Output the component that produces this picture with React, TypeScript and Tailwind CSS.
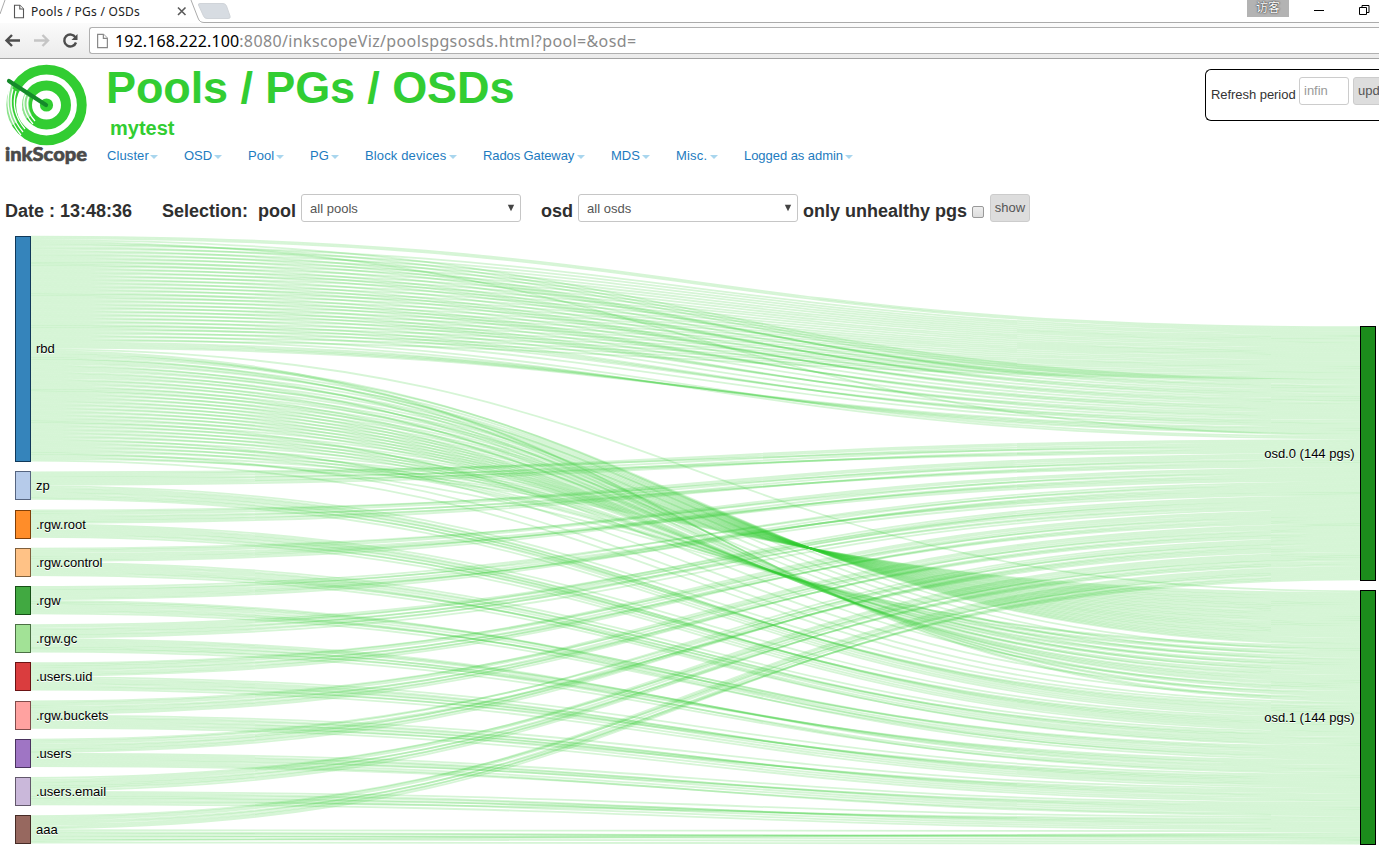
import React from "react";

type Link = { pool: number; osd: number; sy: number; ty: number };
type Cmp = (a: Link, b: Link) => number;

const K = 1.764;
const PAD = 9.97;
const TOP = 235.65;

const pools = [
  { name: "rbd", pgs: 64, color: "#3584bb", border: "#10395a" },
  { name: "zp", pgs: 8, color: "#b6cbea", border: "#566580" },
  { name: ".rgw.root", pgs: 8, color: "#ff8d29", border: "#804009" },
  { name: ".rgw.control", pgs: 8, color: "#ffc286", border: "#80603c" },
  { name: ".rgw", pgs: 8, color: "#41a941", border: "#165016" },
  { name: ".rgw.gc", pgs: 8, color: "#a2e296", border: "#4c7045" },
  { name: ".users.uid", pgs: 8, color: "#da3d3e", border: "#6b1314" },
  { name: ".rgw.buckets", pgs: 8, color: "#ffa2a0", border: "#804c4b" },
  { name: ".users", pgs: 8, color: "#9f75c4", border: "#4a335f" },
  { name: ".users.email", pgs: 8, color: "#cab8da", border: "#62586b" },
  { name: "aaa", pgs: 8, color: "#97685f", border: "#462b26" },
];

const osds = [
  { name: "osd.0 (144 pgs)", y: 326.3 },
  { name: "osd.1 (144 pgs)", y: 590.4 },
];

// In-place quicksort; equal keys are deliberately left in partition order.
function quickSort(a: Link[], cmp: Cmp, from = 0, to = a.length): void {
  while (true) {
    if (to - from <= 10) {
      for (let i = from + 1; i < to; i++) {
        const el = a[i];
        let j = i - 1;
        for (; j >= from; j--) {
          if (cmp(a[j], el) > 0) a[j + 1] = a[j];
          else break;
        }
        a[j + 1] = el;
      }
      return;
    }
    const third = from + ((to - from) >> 1);
    let v0 = a[from];
    let v1 = a[to - 1];
    let v2 = a[third];
    if (cmp(v0, v1) > 0) [v0, v1] = [v1, v0];
    if (cmp(v0, v2) >= 0) {
      const t = v0;
      v0 = v2;
      v2 = v1;
      v1 = t;
    } else if (cmp(v1, v2) > 0) {
      [v1, v2] = [v2, v1];
    }
    a[from] = v0;
    a[to - 1] = v2;
    const pivot = v1;
    let low = from + 1;
    let high = to - 1;
    a[third] = a[low];
    a[low] = pivot;
    partition: for (let i = low + 1; i < high; i++) {
      let el = a[i];
      let order = cmp(el, pivot);
      if (order < 0) {
        a[i] = a[low];
        a[low] = el;
        low++;
      } else if (order > 0) {
        do {
          high--;
          if (high === i) break partition;
          order = cmp(a[high], pivot);
        } while (order > 0);
        a[i] = a[high];
        a[high] = el;
        if (order < 0) {
          el = a[i];
          a[i] = a[low];
          a[low] = el;
          low++;
        }
      }
    }
    if (to - high < low - from) {
      quickSort(a, cmp, high, to);
      to = low;
    } else {
      quickSort(a, cmp, from, low);
      from = high;
    }
  }
}

// Completes a slot table: every free target takes the next unused source.
function fill(table: number[], descending: boolean): number[] {
  const used = new Set(table.filter((s) => s !== undefined));
  const free = Array.from({ length: 64 }, (_, i) => i).filter((i) => !used.has(i));
  if (descending) free.reverse();
  return Array.from({ length: 64 }, (_, j) => (table[j] !== undefined ? table[j] : (free.shift() as number)));
}

function rbdToOsd0(): number[] {
  const t: number[] = [];
  t[0] = 0;
  t[1] = 1;
  for (let j = 2; j < 30; j++) t[j] = 2 * j + 1;
  [63, 62, 61, 60, 3].forEach((s, i) => (t[57 + i] = s));
  const full = fill(t, false);
  for (let j = 33; j < 54; j += 4) [full[j], full[j + 2]] = [full[j + 2], full[j]];
  return full;
}

function rbdToOsd1(): number[] {
  const t: number[] = [];
  t[0] = 0;
  for (let j = 1; j <= 30; j++) t[j] = 64 - 2 * j;
  [3, 7, 11, 15, 19, 23, 27, 41, 51, 59, 63].forEach((s, i) => (t[33 + 3 * i] = s));
  return fill(t, true);
}

function layout() {
  let y = TOP;
  const nodes = pools.map((p) => {
    const h = p.pgs * 2 * K;
    const node = { ...p, y, h };
    y += h + PAD;
    return node;
  });
  const links: Link[] = [];
  pools.forEach((p, i) => {
    for (let g = 0; g < p.pgs; g++) {
      links.push({ pool: i, osd: 0, sy: 0, ty: 0 });
      links.push({ pool: i, osd: 1, sy: 0, ty: 0 });
    }
  });
  nodes.forEach((n, i) => {
    const own = links.filter((l) => l.pool === i);
    quickSort(own, (a, b) => a.osd - b.osd);
    own.forEach((l, k) => (l.sy = n.y + (k + 0.5) * K));
  });
  osds.forEach((o, i) => {
    const own = links.filter((l) => l.osd === i);
    quickSort(own, (a, b) => a.pool - b.pool);
    const slots = i === 0 ? rbdToOsd0() : rbdToOsd1();
    own.forEach((l, k) => {
      l.ty = o.y + (k + 0.5) * K;
      if (l.pool === 0) l.sy = TOP + (slots[k] + i * 64 + 0.5) * K;
    });
  });
  return { nodes, links };
}

const { nodes, links } = layout();

function Sankey() {
  return (
    <svg width="1379" height="620" viewBox="0 230 1379 620" className="block font-['Liberation_Sans',Arial,sans-serif] text-[13px]">
      <g fill="none" stroke="#32cd32" strokeOpacity="0.2" strokeWidth={K + 0.03}>
        {links.map((l, i) => (
          <path key={i} d={`M31,${l.sy}C695.5,${l.sy} 695.5,${l.ty} 1360,${l.ty}`} />
        ))}
      </g>
      {nodes.map((n) => (
        <g key={n.name}>
          <rect x="15.5" y={Math.round(n.y) + 0.5} width="15" height={Math.floor(n.h)} fill={n.color} stroke={n.border} shapeRendering="crispEdges" />
          <text x="36" y={Math.round(n.y + n.h / 2 + 4.85)} fill="#000" className="[text-shadow:0_1px_0_#fff]">{n.name}</text>
        </g>
      ))}
      {osds.map((o) => (
        <g key={o.name}>
          <rect x="1360.5" y={Math.round(o.y) + 0.5} width="15" height="254" fill="#1c8c1c" stroke="#000" shapeRendering="crispEdges" />
          <text x="1354.5" y={o.y + 131.5} textAnchor="end" fill="#000" className="[text-shadow:0_1px_0_#fff]">{o.name}</text>
        </g>
      ))}
    </svg>
  );
}

function PageIcon({ className, stroke }: { className: string; stroke: string }) {
  return (
    <svg viewBox="0 0 12 14" className={className} fill="#fff" stroke={stroke} strokeWidth="1.1">
      <path d="M1.5 .8h5.3l3.7 3.7v8.7h-9z" />
      <path d="M6.8 .8v3.7h3.7" />
    </svg>
  );
}

function BrowserChrome() {
  return (
    <header className="relative h-[59px] w-full shrink-0 border-b border-[#a3a3a3] bg-white font-['Noto_Sans','Noto_Sans_CJK_SC',sans-serif]">
      <div className="flex h-[23px] items-center">
        <svg width="240" height="23" className="absolute left-0 top-0">
          <path d="M191 0L198 18Q199.500 22.500 204 22.500H240" fill="none" stroke="#ababab" />
          <path d="M0 14L5 0" stroke="#ababab" />
          <path d="M200 3.500H223Q225.500 3.500 226.500 6L230 16Q231 18.500 228 18.500H207Q204.500 18.500 203.500 16L198.500 5Q198 3.500 200 3.500Z" fill="#d7dce2" stroke="#d0d4d9" />
          <path d="M178 7.500l7.500 7.500m0-7.500l-7.500 7.500" stroke="#5a5a5a" strokeWidth="1.600" />
        </svg>
        <PageIcon className="ml-[13px] h-[15px] w-3" stroke="#555" />
        <span className="ml-[6px] w-[120px] text-[12px] leading-[22px] tracking-[0.27px] whitespace-nowrap text-[#222]">Pools / PGs / OSDs</span>
        <div className="ml-[89px] h-[23px] flex-1 border-b border-[#ababab]" />
      </div>
      <div className="flex h-[35px] items-center bg-linear-to-b from-[#fbfbfb] to-[#ebebeb]">
        <svg width="89" height="35" fill="none">
          <g stroke="#4d4d4d" strokeWidth="2.400">
            <path d="M20 17.500H7M12 12l-5.500 5.500L12 23" />
            <path d="M75.500 14.500A6 6 0 1 0 76 19.500" />
          </g>
          <path d="M77.500 11v6h-6z" fill="#4d4d4d" />
          <path d="M34 17.500h13M42.500 12l5.500 5.500L42.500 23" stroke="#c5c5c5" strokeWidth="2.400" />
        </svg>
        <div className="flex h-[27px] flex-1 items-center rounded-l-[3px] border border-r-0 border-[#b0b0b0] bg-white">
          <PageIcon className="ml-[6px] h-[16px] w-[13px]" stroke="#888" />
          <span className="ml-[6px] text-[16px] leading-6 whitespace-nowrap text-[#8a8a8a]">
            <span className="tracking-[0.1px] text-black">192.168.222.100</span>
            <span className="tracking-[0.37px]">:8080/inkscopeViz/poolspgsosds.html?pool=&amp;osd=</span>
          </span>
        </div>
      </div>
      <div className="absolute left-[1247px] top-0 flex h-[17px] w-[42px] items-center justify-center bg-[#b3b3b3] pb-[2px] text-[12px] leading-none text-white [text-shadow:0_0_2px_#333,0_0_1px_#333]">访客</div>
      <svg width="70" height="22" className="absolute left-[1309px] top-0" fill="none" stroke="#000">
        <path d="M5 10.500h10M50.500 7.500h7v7h-7zM53 7.500v-2h7v7H58" />
      </svg>
    </header>
  );
}

function Logo() {
  return (
    <svg width="90" height="112" viewBox="0 59 90 112" className="shrink-0">
      <circle cx="46.500" cy="105" r="35.300" fill="none" stroke="#32cd32" strokeWidth="9.800" />
      <circle cx="46.500" cy="105" r="19.500" fill="none" stroke="#32cd32" strokeWidth="10" />
      <circle cx="46.500" cy="105" r="6.600" fill="#32cd32" />
      <g fill="none" stroke="#fff" strokeWidth="1.300">
        <path d="M10 87Q3 113 21 135" />
        <path d="M13 89Q6 112 23 132" />
        <path d="M16 91Q10 111 25 129" />
        <path d="M25.500 95Q20 109 33 124" />
        <path d="M28.500 97Q24 109 35 121" />
      </g>
      <g stroke="#fff" strokeOpacity="0.450" fill="none">
        <path d="M9.500 85Q4.500 107 14 124" strokeWidth="8" />
        <path d="M27 94Q23 108 29 117" strokeWidth="7" />
      </g>
      <path d="M9 81L46 105" stroke="#158a2a" strokeWidth="4.200" strokeLinecap="round" />
      <text x="5" y="161" textLength="82" lengthAdjust="spacingAndGlyphs" className="font-['Lato',sans-serif] text-[19px] font-black" fill="#4a4a4a" stroke="#4a4a4a" strokeWidth="0.600">inkScope</text>
    </svg>
  );
}

const menu = [
  { label: "Cluster", cls: "w-[77px]", text: "w-[42px] tracking-[0.1px]" },
  { label: "OSD", cls: "w-[64px]", text: "w-[29px]" },
  { label: "Pool", cls: "w-[62px]", text: "w-[27px]" },
  { label: "PG", cls: "w-[55px]", text: "w-[20px]" },
  { label: "Block devices", cls: "w-[118px]", text: "w-[83px] tracking-[0.14px]" },
  { label: "Rados Gateway", cls: "w-[128px]", text: "w-[93px] tracking-[-0.1px]" },
  { label: "MDS", cls: "w-[65px]", text: "w-[30px]" },
  { label: "Misc.", cls: "w-[68px]", text: "w-[33px] tracking-[0.2px]" },
  { label: "Logged as admin", cls: "w-[120px]", text: "w-[100px] tracking-[-0.05px]" },
];

function Select({ value }: { value: string }) {
  return (
    <div className="flex h-7 w-[220px] items-center justify-between rounded-[3px] border border-[#c6c6c6] bg-white pl-2 pr-[5px] text-[13px] text-[#555]">
      <span className="pt-0.5 tracking-[0.02px]">{value}</span>
      <svg width="8" height="8"><path d="M.8 .8h6.400L4 7.200z" fill="#444" /></svg>
    </div>
  );
}

export default function App() {
  return (
    <div className="flex h-[850px] w-[1379px] flex-col overflow-hidden bg-white font-['Liberation_Sans',Arial,sans-serif]">
      <BrowserChrome />
      <div className="flex h-[112px] shrink-0">
        <Logo />
        <div className="ml-4 flex-1">
          <h1 className="mt-[3px] h-[52px] text-[45px] leading-[52px] font-bold tracking-[-0.1px] whitespace-nowrap text-[#32cd32]">Pools / PGs / OSDs</h1>
          <h2 className="ml-1 h-[28px] pt-[2px] text-[20px] leading-[25px] font-bold text-[#32cd32]">mytest</h2>
          <nav className="ml-px flex h-[28px] items-center text-[13px] text-[#1d7bc0]">
            {menu.map((m) => (
              <div key={m.label} className={`flex shrink-0 items-center whitespace-nowrap ${m.cls}`}>
                <span className={`shrink-0 ${m.text}`}>{m.label}</span>
                <svg width="8" height="4" className="mt-[2px] ml-px shrink-0"><path d="M0 0h8L4 4z" fill="#a9d6ee" /></svg>
              </div>
            ))}
          </nav>
        </div>
        <div className="mt-[10px] flex h-[52px] w-[174px] shrink-0 overflow-hidden rounded-l-[6px] border border-r-0 border-black pl-[5px] pt-[7px] text-[13px] whitespace-nowrap text-[#333]">
          <span className="mt-[9px] w-[88px] shrink-0 leading-[17px] tracking-[-0.05px]">Refresh period</span>
          <div className="h-7 w-[50px] shrink-0 rounded-[3px] border border-[#ccc] pl-1 text-[13px] leading-[25px] text-[#999]">infin</div>
          <div className="ml-1 h-7 w-14 shrink-0 rounded-[3px] border border-[#ccc] bg-[#ddd] pl-1 leading-[25px] text-[#555]">update</div>
        </div>
      </div>
      <div className="flex h-[59px] shrink-0 pt-[23px] text-[18px] leading-[34px] font-bold whitespace-nowrap text-[#2f2f2f]">
        <span className="ml-[5px] w-[157px]">Date : 13:48:36</span>
        <span className="w-[96px]">Selection:</span>
        <span className="w-[43px]">pool</span>
        <div className="font-normal leading-5"><Select value="all pools" /></div>
        <span className="ml-5 w-[37px]">osd</span>
        <div className="font-normal leading-5"><Select value="all osds" /></div>
        <span className="ml-[5px] w-[164px]">only unhealthy pgs</span>
        <div className="mt-3 ml-[5px] h-3 w-3 rounded-[2px] border border-[#999] bg-linear-to-b from-[#eee] to-[#ddd]" />
        <div className="ml-[6px] h-7 w-10 rounded-[3px] border border-[#ccc] bg-[#ddd] text-center text-[13px] leading-[25px] font-normal text-[#555]">show</div>
      </div>
      <Sankey />
    </div>
  );
}
